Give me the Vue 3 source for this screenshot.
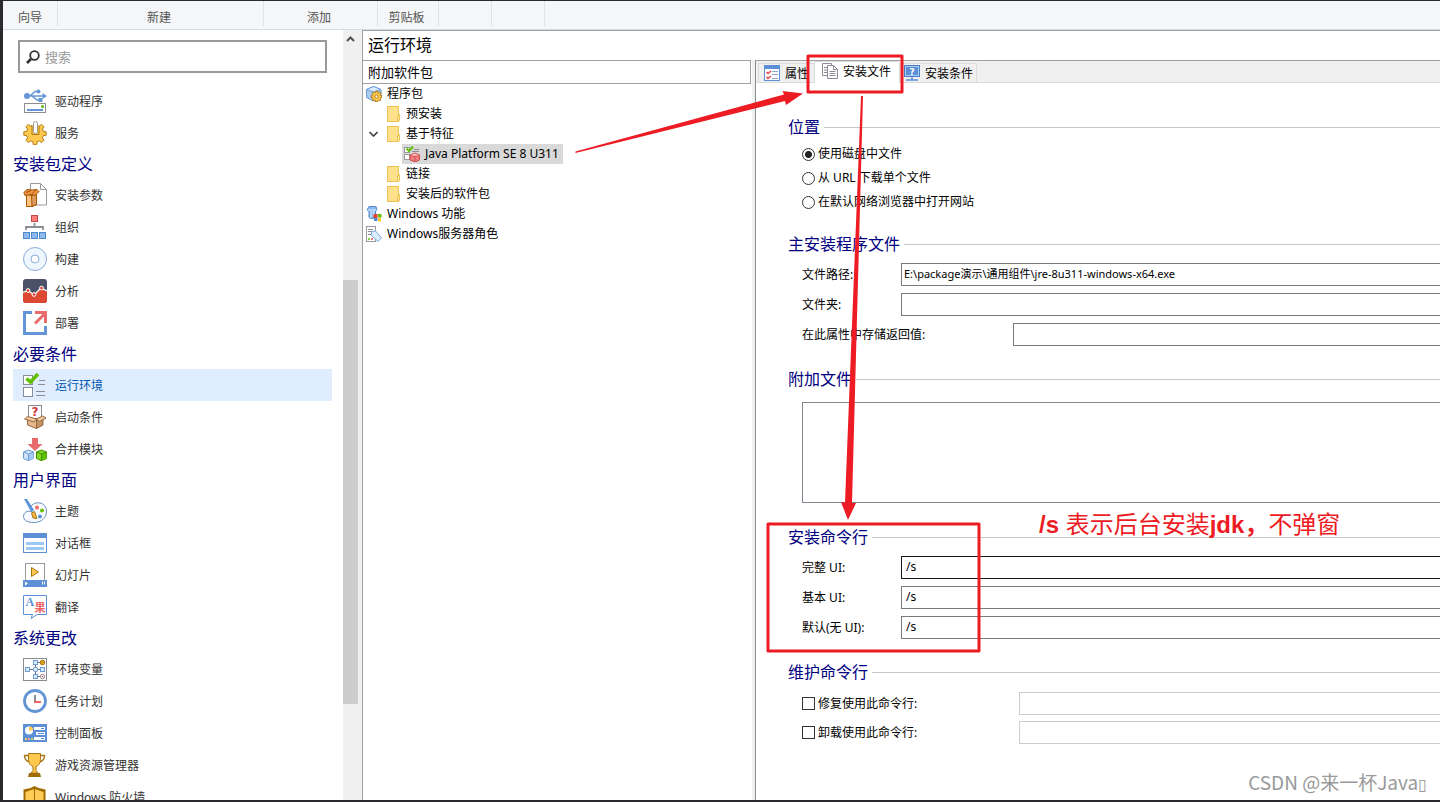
<script setup>
import { ref } from 'vue'

const ribbonGroups = [
  { label: '向导', size: 'g-wizard' },
  { label: '新建', size: 'g-new' },
  { label: '添加', size: 'g-add' },
  { label: '剪贴板', size: 'g-clip' },
  { label: '', size: 'g-blank' },
  { label: '', size: 'g-blank' },
]

const search = ref('')
const activePage = ref('运行环境')

const sections = [
  {
    title: '',
    items: [
      { label: '驱动程序', icon: 'driver' },
      { label: '服务', icon: 'service' },
    ],
  },
  {
    title: '安装包定义',
    items: [
      { label: '安装参数', icon: 'params' },
      { label: '组织', icon: 'org' },
      { label: '构建', icon: 'disc' },
      { label: '分析', icon: 'chart' },
      { label: '部署', icon: 'deploy' },
    ],
  },
  {
    title: '必要条件',
    items: [
      { label: '运行环境', icon: 'prereq' },
      { label: '启动条件', icon: 'launch' },
      { label: '合并模块', icon: 'merge' },
    ],
  },
  {
    title: '用户界面',
    items: [
      { label: '主题', icon: 'theme' },
      { label: '对话框', icon: 'dialog' },
      { label: '幻灯片', icon: 'slides' },
      { label: '翻译', icon: 'translate' },
    ],
  },
  {
    title: '系统更改',
    items: [
      { label: '环境变量', icon: 'env' },
      { label: '任务计划', icon: 'clock' },
      { label: '控制面板', icon: 'panel' },
      { label: '游戏资源管理器', icon: 'trophy' },
      { label: 'Windows 防火墙', icon: 'shield' },
    ],
  },
]

function gearPath(cx, cy, inner, outer, teeth) {
  const pts = []
  const step = (Math.PI * 2) / teeth
  for (let i = 0; i < teeth; i++) {
    const a = i * step
    for (const [k, r] of [[-0.32, inner], [-0.19, outer], [0.19, outer], [0.32, inner]]) {
      pts.push(`${(cx + r * Math.cos(a + k * step)).toFixed(1)} ${(cy + r * Math.sin(a + k * step)).toFixed(1)}`)
    }
  }
  return `M${pts.join('L')}Z`
}

const icons = {
  driver:
    '<circle cx="4" cy="7" r="3" fill="#6495d6"/><path d="M4 7h16M7 7l5-4.5h3M9 7l5 4h3" fill="none" stroke="#6495d6" stroke-width="1.6"/><path d="M19.500 4l4.500 3-4.500 3z" fill="#6495d6"/><circle cx="15.500" cy="2.500" r="2" fill="#6495d6"/><rect x="15.500" y="9" width="4" height="4" fill="#6495d6"/><rect x="1.500" y="14.500" width="21" height="9" fill="#fff" stroke="#8c8c94"/><path d="M4 21h16" stroke="#6495d6" stroke-width="2"/><circle cx="19.500" cy="17.500" r="1.500" fill="#5fc000"/>',
  service:
    `<path d="${gearPath(12, 12.5, 8.6, 11.3, 8)}" fill="#ffc84f" stroke="#b07d14" stroke-linejoin="round"/><rect x="9" y="0" width="7" height="8" fill="#fff"/><path d="M9 4.500v9h7v-9" fill="#ffc84f" stroke="#b07d14"/><rect x="10.500" y=".5" width="4" height="12" rx="2" fill="#fff" stroke="#9a9a9a"/>`,
  params:
    '<path d="M7.500.5h10l6 6v15.500h-16z" fill="#fff" stroke="#9a9aa0"/><path d="M17.500.5v6h6" fill="none" stroke="#9a9aa0"/><path d="M3.500 11.500l5 1 5-1v10l-4 2h-6z" fill="#ffc282" stroke="#a85400"/><path d="M8.500 12.500l5-1.500v10.500l-4.500 2z" fill="#d99a60" stroke="#a85400"/><path d="M.8 9.500L4 6.500l5 .5 5-.5 2 2-4 4-4-1-6 1z" fill="#eb9444" stroke="#a85400"/><path d="M3 9.500l5-2M9 11l4-4" stroke="#a85400" fill="none"/>',
  org:
    '<rect x="8.500" y=".5" width="6" height="6" fill="#ff7f7f" stroke="#c84848"/><path d="M11.500 8v4M3 15v-3h17v3" fill="none" stroke="#8a8f96" stroke-width="1.800"/><g fill="#8dbbee" stroke="#4f88cc"><rect x=".5" y="17.500" width="6" height="6"/><rect x="8.500" y="17.500" width="6" height="6"/><rect x="16.500" y="17.500" width="6" height="6"/></g>',
  disc:
    '<circle cx="12" cy="12" r="11.500" fill="#eef6ff" stroke="#8badd8"/><circle cx="12" cy="12" r="4" fill="#fff" stroke="#8badd8"/>',
  chart:
    '<rect width="24" height="24" rx="3" fill="#4a5168"/><path d="M0 13.500l5-2 6 4.500 7-7 6 3.500V21a3 3 0 0 1-3 3H3a3 3 0 0 1-3-3z" fill="#dd4833"/><path d="M0 13.500l5-2 6 4.500 7-7 6 3" fill="none" stroke="#fff" stroke-width="1.300"/><g fill="#dd4833" stroke="#fff"><circle cx="5" cy="11.500" r="1.900"/><circle cx="11" cy="15.500" r="1.900"/><circle cx="18.500" cy="9" r="1.900"/></g>',
  deploy:
    '<path d="M9 1.500H1.500v21h21V15" fill="none" stroke="#6495d6" stroke-width="3"/><path d="M12 1.500h10.500V12M12 12.500L22 2.500" fill="none" stroke="#e86c6c" stroke-width="3"/>',
  prereq:
    '<g fill="#fff" stroke="#8c8c94"><rect x=".5" y="2.500" width="9" height="9"/><rect x=".5" y="14.500" width="9" height="9"/></g><path d="M16 7.500h6M15 11.500h7M13 18.500h9M13 22.500h9" stroke="#8c8c94"/><path d="M3.500 5.500l4 3.500 7.500-8" fill="none" stroke="#5fc000" stroke-width="3.600"/>',
  launch:
    '<rect x="5.500" y=".5" width="13" height="13" fill="#fff" stroke="#8c8c94"/><text x="12" y="10.500" text-anchor="middle" font-size="12" font-weight="700" font-family="DejaVu Sans" fill="#d23c3c">?</text><path d="M4.500 13l9 2v8.500l-9-3.500z" fill="#e3b88c" stroke="#94663c"/><path d="M13.500 15l6.500-2v7l-6.500 3.500z" fill="#c29264" stroke="#94663c"/><path d="M4.500 11.500l9 2.500-2.500 3-9.500-3zM19.500 11l-6 3 3 2.500 6.500-3.500z" fill="#f0cba4" stroke="#94663c"/>',
  merge:
    '<path d="M9 1h6v6h4.500L12 14 4.500 7H9z" fill="#e86c6c"/><path d="M.5 15l5-2 5 2v6.500l-5 2.200-5-2.200z" fill="#cfe4fb" stroke="#6d9bd6"/><path d="M5.500 17.500l5-2v6l-5 2z" fill="#a3c9f5"/><path d="M.5 15l5 2 5-2M5.500 17v6.500" fill="none" stroke="#6d9bd6"/><path d="M13.500 15l5-2 5 2v6.500l-5 2.200-5-2.200z" fill="#86d82c" stroke="#3f8f00"/><path d="M18.500 17.500l5-2v6l-5 2z" fill="#5fc000"/><path d="M13.500 15l5 2 5-2M18.500 17v6.500" fill="none" stroke="#3f8f00"/>',
  theme:
    '<path d="M7 9C9 4 14 3.500 17 4c4 .8 6.500 4 6.500 8 0 7-5 11.500-12.500 11.500C5 23.500.5 21.500.5 17.500.5 13 5 11.500 7 12.500c1.500.5 2-1.500 0-3.500z" fill="#f7fbff" stroke="#6a8fb8"/><circle cx="14" cy="8.500" r="2" fill="#ef6c6c"/><circle cx="19" cy="11.500" r="2" fill="#5fc000"/><circle cx="17" cy="17.500" r="2" fill="#5c94d8"/><path d="M1 0h3l7 11-2.500 2.500z" fill="#5c94d8"/><path d="M8.500 14l3-1.500 2.500 7-4-.5z" fill="#f7b83c" stroke="#a87420"/>',
  dialog:
    '<rect x=".5" y="2.500" width="23" height="19" fill="#fff" stroke="#5c8fd6"/><rect y="2" width="24" height="5" fill="#5c8fd6"/><path d="M3 12.500h18M3 17.500h18" stroke="#9cc8f5" stroke-width="3"/>',
  slides:
    '<rect x="2.500" y=".5" width="19" height="18" fill="#fff" stroke="#9a9a9a"/><path d="M8.500 4.500v9l7-4.500z" fill="#ffc84f" stroke="#a87414"/><rect y="17" width="24" height="7" fill="#5c8fd6"/><path d="M2 18.500v4l3-2zM19 18.500h1v3h-1zM21 18.500h1v3h-1z" fill="#fff"/>',
  translate:
    '<path d="M.5.5h23v19H14l-6 4 1.500-4h-9z" fill="#fff" stroke="#5c8fd6"/><text x="2.500" y="10.500" font-size="12" font-weight="700" font-family="Liberation Serif" fill="#5c8fd6">A</text><text x="11.500" y="17" font-size="11" font-weight="700" font-family="Noto Sans CJK SC" fill="#f06464">果</text>',
  env:
    '<rect x=".5" y="1.500" width="23" height="22" fill="#fff" stroke="#8c8c94"/><path d="M4.500 12.500h15M12.500 5.500v14M12.500 5.500h7M12.500 19.500h7" stroke="#6a6a72"/><g fill="#d8eaff" stroke="#6d9bd6"><rect x="2.500" y="10.500" width="4" height="4"/><rect x="17.500" y="10.500" width="4" height="4"/><rect x="10.500" y="3.500" width="4" height="4"/><rect x="10.500" y="17.500" width="4" height="4"/><circle cx="12.500" cy="12.500" r="2.300"/></g><circle cx="19.500" cy="5.500" r="2.300" fill="#d8a020" stroke="#a87414"/><circle cx="19.500" cy="19.500" r="2.200" fill="#fff" stroke="#9a8c8c"/><circle cx="19.500" cy="19.500" r=".8" fill="#d84848"/>',
  clock:
    '<circle cx="12" cy="12" r="10.500" fill="#fff" stroke="#6495d6" stroke-width="2.800"/><path d="M12 6v8" stroke="#8a8f96" stroke-width="2"/><path d="M11 13h7" stroke="#f06464" stroke-width="2"/>',
  panel:
    '<rect y="3" width="24" height="18" fill="#5c8fd6"/><circle cx="6" cy="9.500" r="4" fill="#fff"/><path d="M6 5.500v4h4a4 4 0 0 0-4-4z" fill="#ffc84f"/><path d="M11 7.500h11M13 12.500h9M11 17.500h11" stroke="#fff" stroke-width="3"/><path d="M18 7.500h3M15 12.500h6M18 17.500h3" stroke="#5c8fd6"/><path d="M2 17h2v2H2z" fill="#ffc84f"/><path d="M5 17h2v2H5z" fill="#f4a0b0"/><path d="M8 17h2v2H8z" fill="#a8e070"/>',
  trophy:
    '<path d="M5 2.500H1.500c0 3 1 5.500 5 6.500M18 2.500h3.500c0 3-1 5.500-5 6.500" fill="none" stroke="#a87414" stroke-width="1.400"/><path d="M5.500.5h12v6c0 4-2 6-4.500 7v4l2 2.500h-7l2-2.500v-4c-2.500-1-4.500-3-4.500-7z" fill="#ffc84f" stroke="#a87414"/><path d="M6 20h11l1 4H5z" fill="#a06c0a"/>',
  shield:
    '<path d="M11.500 1l4 2 7 1.500V14c0 4-5 8-11 10C5.500 22 .5 18 .5 14V4.500l7-1.500z" fill="#a06c00"/><path d="M11.500 4l9 3v8l-9 7-9-7V7z" fill="#ffcb57"/><path d="M11.500 3v20" stroke="#a06c00"/>',
  package:
    '<path d="M.5 3.500l7-3 7.500 3v8l-7.500 3.500-7-3.500z" fill="#a8cdf5" stroke="#6d9bd6"/><path d="M.5 3.500l7-3 7.500 3-7.500 2.500z" fill="#d8eaff" stroke="#6d9bd6"/>' +
    `<path d="${gearPath(10.5, 10.5, 4.2, 5.6, 8)}" fill="#ffc84f" stroke="#b07d14"/><circle cx="10.500" cy="10.500" r="1.500" fill="#fff" stroke="#b07d14"/>`,
  folder:
    '<rect x=".5" y=".5" width="11" height="15" fill="#ffe08c" stroke="#ecc34e"/><path d="M12.500 8.500v6l-2 1v-6z" fill="#ffe9a8" stroke="#ecc34e"/>',
  prereqItem:
    '<g fill="#fff" stroke="#9a9aa0"><rect x=".5" y="1.500" width="5" height="5"/><rect x=".5" y="8.500" width="5" height="5"/></g><path d="M10 3.500h5M8 5.500h7" stroke="#8c8c94"/><path d="M2.500 2.500l2.500 2.500 4-4.500" fill="none" stroke="#5fc000" stroke-width="2.200"/><path d="M6 9l5-2 4.500 2v5L11 16l-5-2z" fill="#f08080" stroke="#cc4c4c"/><path d="M6 9l5 1.500 4.500-1.500M11 10.500V16" fill="none" stroke="#cc4c4c"/><path d="M6.500 9L11 7.500 15 9l-4 1z" fill="#ffc0c0"/>',
  feature:
    '<path d="M1 4l2-3.500h7L11 4l-1.500 1V12l-5 .5-1.500-1V5z" fill="#8dbbee" stroke="#4f88cc"/><path d="M1.500 4h9M5 5v7M7.500 5v5" stroke="#d8eaff"/><path d="M7.500 8h4v4h-4z" fill="#e04030"/><path d="M12 8h3.500v3.500H12z" fill="#5fc000"/><path d="M8 12h3.500v3H8z" fill="#4f88dc"/><path d="M12 12h3v3.500h-3z" fill="#ffc820"/>',
  role:
    '<rect x=".5" y=".5" width="9" height="15" fill="#fff" stroke="#9a9aa0"/><path d="M2 3.500h5M2 5.500h5M2 8.500h3" stroke="#8c8c94"/><circle cx="3" cy="13" r="1" fill="#5fc000"/><circle cx="6" cy="13" r="1" fill="#e05050"/><path d="M5.500 5.500l4-.5 6 7-3.500 3.500-6.500-6z" fill="#dcecff" stroke="#7aa4d8"/>',
  tabProps:
    '<rect x=".5" y=".5" width="15" height="15" fill="#fff" stroke="#5c8fd6"/><rect width="16" height="4" fill="#5c8fd6"/><path d="M8 6.500h6M8 9.500h6M8 13.500h6" stroke="#8aa8d0"/><path d="M2.500 7l1.500 1.500 3-2.500M2.500 12l1.500 1.500 3-2.500" fill="none" stroke="#e04848" stroke-width="1.500"/>',
  tabFiles:
    '<path d="M.5.5h9v12h-9z" fill="#fff" stroke="#8c8c94"/><path d="M2 4.500h3M2 7h3M2 9.500h3" stroke="#8c8c94"/><path d="M5.500 2.500h6l4 4v9h-10z" fill="#fff" stroke="#8c8c94"/><path d="M11.500 2.500v4h4M7.500 8.500h6M7.500 10.500h6M7.500 12.500h6" fill="none" stroke="#8c8c94"/>',
  tabCond:
    '<rect x=".5" y=".5" width="15" height="11" fill="#5c8fd6" stroke="#4a7fc8"/><rect x="1.500" y="1.500" width="13" height="9" fill="none" stroke="#a8ccf4"/><text x="8" y="9.500" text-anchor="middle" font-size="9" font-weight="700" font-family="DejaVu Sans" fill="#fff">?</text><path d="M8 12v3M2 15h12" stroke="#5c8fd6" stroke-width="1.500"/>',
}

const tree = [
  { label: '程序包', icon: 'package', level: 0 },
  { label: '预安装', icon: 'folder', level: 1 },
  { label: '基于特征', icon: 'folder', level: 1, open: true },
  { label: 'Java Platform SE 8 U311', icon: 'prereqItem', level: 2, selected: true },
  { label: '链接', icon: 'folder', level: 1 },
  { label: '安装后的软件包', icon: 'folder', level: 1 },
  { label: 'Windows 功能', icon: 'feature', level: 0 },
  { label: 'Windows服务器角色', icon: 'role', level: 0 },
]

const tabs = [
  { label: '属性', icon: 'tabProps' },
  { label: '安装文件', icon: 'tabFiles' },
  { label: '安装条件', icon: 'tabCond' },
]
const activeTab = ref('安装文件')

const sources = ['使用磁盘中文件', '从 URL 下载单个文件', '在默认网络浏览器中打开网站']
const source = ref(sources[0])

const filePath = ref('E:\\package演示\\通用组件\\jre-8u311-windows-x64.exe')
const folder = ref('')
const returnProp = ref('')
const extraFiles = ref('')
const commands = ref([
  { id: 'cmd-full', label: '完整 UI:', value: '/s', focused: true },
  { id: 'cmd-basic', label: '基本 UI:', value: '/s' },
  { id: 'cmd-none', label: '默认(无 UI):', value: '/s' },
])
const maintenance = ref([
  { id: 'fix', label: '修复使用此命令行:', on: false, value: '' },
  { id: 'remove', label: '卸载使用此命令行:', on: false, value: '' },
])
</script>

<template>
  <div class="window">
    <header class="ribbon">
      <div v-for="(g, i) in ribbonGroups" :key="i" class="group" :class="g.size">{{ g.label }}</div>
    </header>

    <div class="body">
      <aside class="sidebar">
        <div class="side-list">
          <label class="search">
            <svg class="search-icon" viewBox="0 0 14 14" aria-hidden="true">
              <circle cx="8.500" cy="5.500" r="4.300" fill="none" stroke="#333" stroke-width="1.800" />
              <path d="M5 9L1 13" stroke="#333" stroke-width="2.600" />
            </svg>
            <input v-model="search" type="text" placeholder="搜索" aria-label="搜索" />
          </label>
          <nav>
            <section v-for="s in sections" :key="s.title">
              <h2 v-if="s.title" class="side-title">{{ s.title }}</h2>
              <a
                v-for="item in s.items"
                :key="item.label"
                href="#"
                class="side-item"
                :class="{ current: item.label === activePage }"
                @click.prevent="activePage = item.label"
              >
                <svg class="icon-lg" viewBox="0 0 24 24" aria-hidden="true" v-html="icons[item.icon]"></svg>
                <span>{{ item.label }}</span>
              </a>
            </section>
          </nav>
        </div>
        <div class="scrollbar">
          <svg class="scroll-up" viewBox="0 0 9 6" aria-hidden="true">
            <path d="M1 5l3.500-3.500L8 5" fill="none" stroke="#505050" stroke-width="2" />
          </svg>
          <div class="track"><div class="thumb"></div></div>
        </div>
      </aside>

      <main class="main">
        <h1 class="page-title">运行环境</h1>
        <div class="split">
          <section class="tree-pane">
            <h2 class="tree-head">附加软件包</h2>
            <ul class="tree">
              <li v-for="n in tree" :key="n.label" class="node" :class="'level-' + n.level">
                <svg v-if="n.open" class="chevron" viewBox="0 0 9 6" aria-hidden="true">
                  <path d="M.5 1l4 4 4-4" fill="none" stroke="#404040" stroke-width="1.600" />
                </svg>
                <button type="button" class="node-btn" :class="{ selected: n.selected }">
                  <svg
                    :class="n.icon === 'folder' ? 'icon-folder' : 'icon-sm'"
                    :viewBox="n.icon === 'folder' ? '0 0 13 16' : '0 0 16 16'"
                    aria-hidden="true"
                    v-html="icons[n.icon]"
                  ></svg>
                  <span>{{ n.label }}</span>
                </button>
              </li>
            </ul>
          </section>

          <div class="splitter"></div>

          <section class="detail">
            <div class="tabs" role="tablist">
              <button
                v-for="t in tabs"
                :key="t.label"
                type="button"
                role="tab"
                class="tab"
                :class="{ active: t.label === activeTab }"
                :aria-selected="t.label === activeTab"
                @click="activeTab = t.label"
              >
                <svg class="icon-sm" viewBox="0 0 16 16" aria-hidden="true" v-html="icons[t.icon]"></svg>
                <span>{{ t.label }}</span>
              </button>
            </div>

            <form class="form" @submit.prevent>
              <section>
                <h3 class="legend">位置</h3>
                <div class="radios">
                  <label v-for="s in sources" :key="s" class="choice">
                    <input v-model="source" type="radio" name="source" :value="s" />
                    <span>{{ s }}</span>
                  </label>
                </div>
              </section>

              <section>
                <h3 class="legend">主安装程序文件</h3>
                <div class="fields">
                  <div class="field">
                    <label for="file-path">文件路径:</label>
                    <input id="file-path" v-model="filePath" class="path" type="text" />
                  </div>
                  <div class="field">
                    <label for="folder">文件夹:</label>
                    <input id="folder" v-model="folder" type="text" />
                  </div>
                  <div class="field wide">
                    <label for="return-prop">在此属性中存储返回值:</label>
                    <input id="return-prop" v-model="returnProp" type="text" />
                  </div>
                </div>
              </section>

              <section>
                <h3 class="legend">附加文件</h3>
                <textarea v-model="extraFiles" class="files" aria-label="附加文件"></textarea>
              </section>

              <section>
                <h3 class="legend">安装命令行</h3>
                <div class="fields">
                  <div v-for="c in commands" :key="c.id" class="field">
                    <label :for="c.id">{{ c.label }}</label>
                    <input :id="c.id" v-model="c.value" type="text" :class="{ focused: c.focused }" />
                  </div>
                </div>
              </section>

              <section>
                <h3 class="legend">维护命令行</h3>
                <div class="fields tight">
                  <div v-for="m in maintenance" :key="m.id" class="field check">
                    <label class="choice">
                      <input v-model="m.on" type="checkbox" />
                      <span>{{ m.label }}</span>
                    </label>
                    <input v-model="m.value" type="text" :aria-label="m.label" :disabled="!m.on" />
                  </div>
                </div>
              </section>
            </form>
          </section>
        </div>
      </main>
    </div>

    <svg class="marks" width="1000" height="700" viewBox="0 0 1000 700" aria-hidden="true">
      <g fill="none" stroke="#ed1c24" stroke-width="3" stroke-linejoin="round">
        <rect x="808" y="56" width="94" height="36" />
        <rect x="768" y="524" width="211" height="127" />
      </g>
      <g fill="#ed1c24">
        <path d="M575.500 151.500L784 94.500l-1.500-3.500 20.500 2.500-17 11.500-1-4-209.500 52z" />
        <path d="M861 96h2l-11 407h4l-8 17-7-18 4 .5z" />
      </g>
    </svg>
    <p class="note"><b>/s</b> 表示后台安装<b>jdk，</b>不弹窗</p>
    <p class="credit">CSDN @来一杯Java<span class="box">▯</span></p>
  </div>
</template>

<style>
body {
  margin: 0;
  background: #2a2a2c;
}
</style>

<style scoped>
* {
  box-sizing: border-box;
}
.window {
  position: relative;
  display: flex;
  flex-direction: column;
  height: 100vh;
  padding: 1px 0 2px 3px;
  overflow: hidden;
  background: #2a2a2c;
  color: #000;
  font: 12px/16px "Noto Sans", "Noto Sans CJK SC", sans-serif;
}
h1, h2, h3, p, ul {
  margin: 0;
  padding: 0;
  font-weight: 400;
}
button, input, textarea {
  margin: 0;
  font: inherit;
  color: inherit;
}
svg {
  display: block;
  flex: none;
}

.ribbon {
  display: flex;
  flex: none;
  height: 29px;
  padding-bottom: 3px;
  background: #f5f6f7;
  border-bottom: 1px solid #d9dcde;
  color: #555;
}
.group {
  padding-top: 9px;
  border-right: 1px solid #e0e2e4;
  text-align: center;
}
.g-wizard { width: 55px; }
.g-new { width: 206px; padding-right: 3px; }
.g-add { width: 114px; padding-right: 3px; }
.g-clip { width: 61px; padding-right: 3px; }
.g-blank { width: 53px; }

.body {
  display: flex;
  flex: 1;
  min-height: 0;
  background: #fff;
}
.sidebar {
  display: flex;
  flex: none;
  width: 359px;
}
.side-list {
  flex: 1;
  overflow: hidden;
  padding: 10px 11px 0 10px;
}
.search {
  display: flex;
  align-items: center;
  gap: 5px;
  height: 33px;
  margin: 0 5px 12px;
  padding: 0 6px;
  border: 2px solid #999;
}
.search-icon {
  width: 14px;
  height: 14px;
}
.search input {
  flex: 1;
  min-width: 0;
  padding: 0;
  border: 0;
  outline: 0;
  background: none;
  font-size: 13px;
}
.search input::placeholder {
  color: #9a9a9a;
}
.side-title {
  height: 30px;
  color: #000080;
  font-size: 16px;
  line-height: 30px;
}
.side-item {
  display: flex;
  align-items: center;
  gap: 8px;
  height: 32px;
  padding-left: 10px;
  color: #333;
  text-decoration: none;
}
.side-item span,
.tab span {
  padding-top: 2px;
}
.side-item.current {
  background: #e0edff;
  color: #0058b0;
}
.icon-lg {
  width: 24px;
  height: 24px;
}
.scrollbar {
  display: flex;
  flex-direction: column;
  width: 19px;
  background: #f0f0f0;
}
.scroll-up {
  width: 9px;
  height: 6px;
  margin: 6px 3px 0;
}
.track {
  display: flex;
  flex-direction: column;
  flex: 1;
  padding: 238px 4px 96px 0;
}
.thumb {
  flex: 1;
  background: #cdcdcd;
}

.main {
  display: flex;
  flex-direction: column;
  flex: 1;
  min-width: 0;
  border-top: 1px solid #a0a0a0;
  border-left: 1px solid #a0a0a0;
}
.page-title {
  height: 29px;
  padding-left: 5px;
  font-size: 16px;
  line-height: 29px;
}
.split {
  display: flex;
  flex: 1;
  min-height: 0;
}
.tree-pane {
  flex: none;
  width: 389px;
}
.tree-head {
  height: 24px;
  margin-right: 1px;
  padding-left: 5px;
  border: 1px solid #a0a0a0;
  border-left: 0;
  font-size: 13px;
  line-height: 22px;
}
.tree {
  list-style: none;
}
.node {
  position: relative;
  display: flex;
  height: 20px;
}
.level-0 { padding-left: 1px; }
.level-1 { padding-left: 22px; }
.level-2 { padding-left: 39px; }
.chevron {
  position: absolute;
  left: 6px;
  top: 7px;
  width: 9px;
  height: 6px;
}
.node-btn {
  display: flex;
  align-items: center;
  gap: 5px;
  padding: 0 4px 0 2px;
  border: 0;
  background: none;
}
.level-1 .node-btn {
  gap: 6px;
}
.node-btn.selected {
  background: #d9d9d9;
}
.icon-sm {
  width: 16px;
  height: 16px;
}
.icon-folder {
  width: 13px;
  height: 16px;
}
.splitter {
  flex: none;
  width: 3px;
  background: #f0f0f0;
}
.detail {
  flex: 1;
  min-width: 0;
  overflow: hidden;
  border-top: 1px solid #a0a0a0;
  border-left: 1px solid #8c8c8c;
}
.tabs {
  display: flex;
  align-items: flex-end;
  height: 22px;
  padding-left: 2px;
  background: #f0f0f0;
  box-shadow: inset 0 -1px #dcdcdc;
}
.tab {
  display: flex;
  align-items: center;
  gap: 5px;
  height: 20px;
  padding: 0 5px;
  border: 1px solid #dcdcdc;
  border-right: 0;
  background: #f0f0f0;
}
.tab:last-child {
  padding: 0 3px 0 4px;
  border-right: 1px solid #dcdcdc;
}
.tab.active {
  height: 22px;
  padding: 0 8px 3px 7px;
  border-bottom: 0;
  background: #fff;
}
.form {
  padding: 34px 0 0 32px;
}
.form > section + section {
  margin-top: 23px;
}
.form > section:nth-child(2) {
  margin-top: 20px;
}
.form > section:nth-child(4) {
  margin-top: 24px;
}
.legend {
  display: flex;
  align-items: center;
  gap: 4px;
  height: 20px;
  color: #000080;
  font-size: 16px;
  line-height: 20px;
}
.legend::after {
  content: "";
  flex: 1;
  height: 1px;
  background: #c8c8c8;
}
.radios {
  padding: 5px 0 0 14px;
}
.choice {
  display: flex;
  align-items: center;
  gap: 3px;
  height: 24px;
}
.choice input {
  appearance: none;
  flex: none;
  width: 13px;
  height: 13px;
  border: 1px solid #333;
  background: #fff;
}
.choice input[type="radio"] {
  border-radius: 50%;
}
.choice input[type="radio"]:checked {
  background: radial-gradient(circle, #222 3px, #fff 4px);
}
.fields {
  display: grid;
  gap: 7px;
  padding: 9px 0 0 14px;
}
.fields.tight {
  gap: 6px;
  padding-top: 10px;
}
.field {
  display: grid;
  grid-template-columns: 99px 1fr;
  align-items: center;
}
.field.wide {
  grid-template-columns: 211px 1fr;
}
.field.check {
  grid-template-columns: 217px 1fr;
}
.field .choice {
  height: 20px;
}
.field > input {
  min-width: 0;
  height: 23px;
  padding: 0 4px 3px;
  border: 1px solid #7a7a7a;
  border-right: 0;
  border-radius: 0;
  background: #fff;
  outline: 0;
}
.field > .path {
  padding-left: 2px;
  font-size: 11px;
}
.field > .focused {
  border-color: #171717;
}
.field > input:disabled {
  border-color: #ccc;
}
.files {
  display: block;
  width: calc(100% - 14px);
  height: 101px;
  margin: 13px 0 0 14px;
  border: 1px solid #828790;
  border-right: 0;
  border-radius: 0;
  outline: 0;
  resize: none;
}

.marks {
  position: absolute;
  left: 0;
  top: 0;
  pointer-events: none;
}
.note {
  position: absolute;
  left: 1039px;
  top: 509px;
  color: #ed1c24;
  font: 24px/32px "Liberation Sans", "Noto Sans CJK SC", sans-serif;
  white-space: nowrap;
}
.credit {
  position: absolute;
  right: 13px;
  bottom: 3px;
  color: #999;
  font: 19px/28px "Noto Sans CJK SC", sans-serif;
  white-space: nowrap;
}
.box {
  font-family: "DejaVu Sans", sans-serif;
  font-size: 16px;
}
</style>
